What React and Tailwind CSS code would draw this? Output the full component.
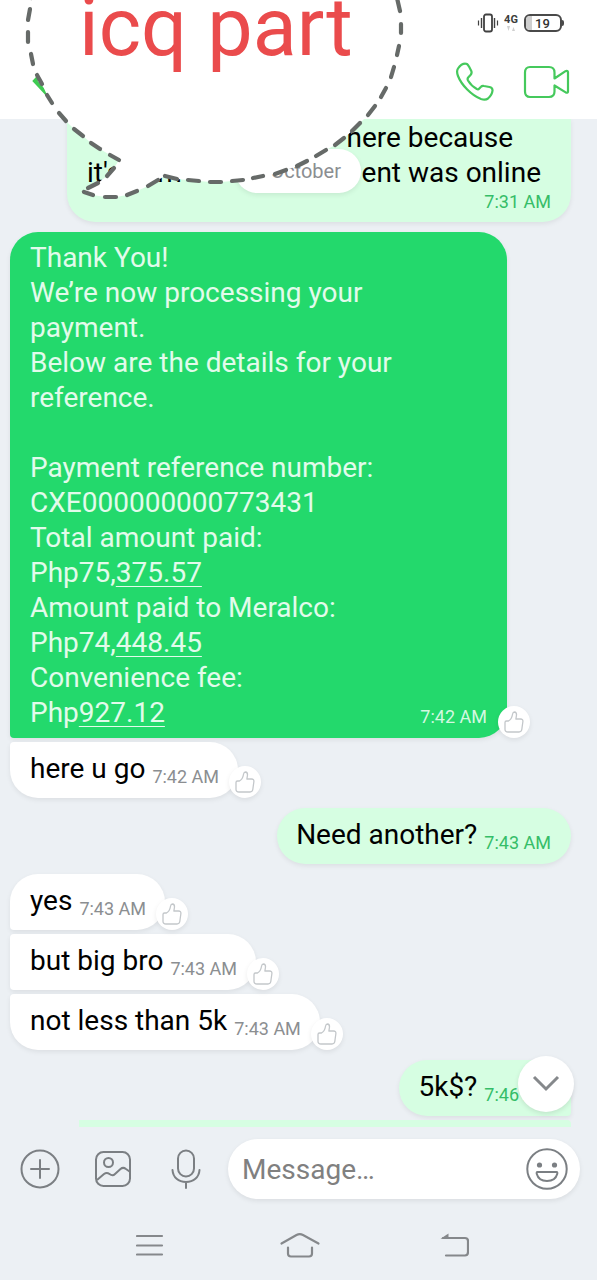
import React, { useState } from 'react';
import { clsx } from 'clsx';

const receiptLines = [
  ['Thank You!'],
  ['We’re now processing your'],
  ['payment.'],
  ['Below are the details for your'],
  ['reference.'],
  [''],
  ['Payment reference number:'],
  ['CXE000000000773431'],
  ['Total amount paid:'],
  ['Php75,', '375.57'],
  ['Amount paid to Meralco:'],
  ['Php74,', '448.45'],
  ['Convenience fee:'],
  ['Php', '927.12'],
];

// x1, y1, x2, y2 of each stroke of the dashed outline
const dashes = [
  [397, -2, 400, 11], [401, 24, 401, 33], [399, 46, 397, 55], [394, 67, 391, 77],
  [386, 88, 381, 97], [375, 106, 368, 115], [360, 123, 352, 131], [344, 138, 335, 145],
  [326, 150, 316, 156], [307, 161, 297, 166], [286, 170, 275, 174], [263, 176, 253, 178],
  [243, 180, 232, 181], [221, 182, 210, 182], [199, 181, 188, 180], [177, 179, 165, 176],
  [158, 180, 148, 186], [137, 191, 127, 195], [116, 197, 105, 197], [93, 195, 84, 192],
  [88, 188, 98, 183], [107, 176, 114, 168], [119, 160, 110, 155], [100, 149, 91, 143],
  [83, 136, 74, 129], [66, 121, 59, 113], [52, 103, 47, 95], [42, 84, 37, 75],
  [33, 64, 31, 54], [28, 42, 28, 32], [28, 20, 30, 9], [31, -2, 32, -6],
];

const outline = dashes.map(([x1, y1, x2, y2]) => `${x1},${y1} ${x2},${y2}`).join(' ');

function Sticker() {
  return (
    <svg className="pointer-events-none absolute top-0 left-0 z-30" width="420" height="210" viewBox="0 0 420 210">
      <polygon points={outline} fill="#fff" />
      {dashes.map(([x1, y1, x2, y2], i) => (
        <line key={i} x1={x1} y1={y1} x2={x2} y2={y2} stroke="#666a68" strokeWidth="4.2" strokeLinecap="round" />
      ))}
      <text x="79" y="55" fontSize="81" fill="#ea4b4c" fontFamily="Roboto, sans-serif">
        icq part
      </text>
    </svg>
  );
}

function LikeButton() {
  const [liked, setLiked] = useState(false);

  return (
    <button
      type="button"
      aria-label="Like"
      onClick={() => setLiked(!liked)}
      className="z-10 -ml-[9px] flex size-8 shrink-0 items-center justify-center rounded-full bg-white shadow-[0_2px_5px_rgba(0,0,0,0.08)]"
    >
      <svg
        width="20"
        height="22"
        viewBox="0 0 20 22"
        fill={liked ? '#d1d5db' : 'none'}
        stroke="#c3c7ca"
        strokeWidth="1.3"
        strokeLinejoin="round"
      >
        <path d="M1 11.5C1 10.5 1.5 10 2.5 10H4.5C6.5 9 8 6.500 8.600 3C8.900 1.200 9.800 1 10.500 1C12 1.200 12.600 2.500 12.500 4L11.900 8H16.500C18.300 8 19 9 18.900 10.500L17.800 18.500C17.500 20.300 16.700 21 15 21H4C2 21 1 20 1 18.500Z" />
      </svg>
    </button>
  );
}

function Incoming({ text, time, className }) {
  return (
    <div className="flex items-end">
      <div className={clsx('flex items-end gap-[7px] rounded-[28px] bg-white pt-[9px] pr-[19px] pb-[11px] pl-5 shadow-[0_2px_5px_rgba(0,0,0,0.07)]', className)}>
        <p className="pb-px text-[28px] leading-[35px] text-black">{text}</p>
        <time className="text-[18px] leading-5 text-[#8b8e91]">{time}</time>
      </div>
      <LikeButton />
    </div>
  );
}

function Outgoing({ text, time, className }) {
  return (
    <div className={clsx('flex items-end gap-[7px] self-end rounded-[28px] bg-[#d6fee2] pt-[9px] pr-5 pb-[11px] pl-[19px] shadow-[0_2px_5px_rgba(0,0,0,0.07)]', className)}>
      <p className="pb-px text-[28px] leading-[35px] text-black">{text}</p>
      <time className="text-[18px] leading-5 whitespace-nowrap text-[#35bd68]">{time}</time>
    </div>
  );
}

function Header() {
  return (
    <header className="bg-white">
      <div className="flex h-[46px] items-center justify-end pr-[33px]">
        <svg width="22" height="20" viewBox="0 0 22 20" fill="none" stroke="#414141">
          <rect x="7" y="1.500" width="8" height="17" rx="2" strokeWidth="1.800" />
          <path d="M4.500 5V15M17.500 5V15" strokeWidth="1.400" />
          <path d="M1.500 7.500V12.500M20.500 7.500V12.500" strokeWidth="1.200" />
        </svg>
        <div className="ml-1 flex w-4 flex-col items-center">
          <span className="text-[11px] leading-3 font-bold text-[#3c3c3c]">4G</span>
          <svg width="10" height="6" viewBox="0 0 10 6" fill="#d0d0d0">
            <path d="M1 0H4L2.500 5ZM6 5L7.500 1L9 5Z" />
          </svg>
        </div>
        <div className="ml-[5px] flex items-center">
          <span className="flex h-[18px] w-[38px] items-center rounded-[6px] border-2 border-[#4a4a4a] bg-white">
            <span className="h-full w-[6px] rounded-l-[4px] bg-[#cfcfcf]" />
            <span className="pl-[3px] text-[13px] leading-none font-medium text-[#333]">19</span>
          </span>
          <span className="h-[6px] w-[2px] rounded-r-sm bg-[#4a4a4a]" />
        </div>
      </div>

      <div className="flex h-[73px] items-center pr-[26px] pb-px pl-[30px]">
        <button type="button" aria-label="Back" className="mr-auto">
          <svg width="24" height="30" viewBox="0 0 24 30" fill="none" stroke="#3fcb52" strokeWidth="4">
            <path d="M17 1L5 14L18 28" />
          </svg>
        </button>
        <button type="button" aria-label="Voice call">
          <svg width="40" height="40" viewBox="0 0 40 40" fill="none" stroke="#45c95c" strokeWidth="2.200" strokeLinejoin="round">
            <path d="M3 6.500C5 3.500 8 1.500 10.500 1.600C12.500 1.600 13.200 3 14 4.500L16.300 9C17 10.600 16.500 11.800 15.500 13L13.200 15.500C12.400 16.500 12.300 17.200 13 18.500C15.300 22.400 18.300 25 21.800 27C22.800 27.500 23.600 27.300 24.300 26.500L26 24.800C26.800 23.900 27.800 23.700 29 24L34.500 25C36.700 25.500 37.700 26.700 37.500 28.700C37.200 31.500 35.500 34.500 33 36.500C31 38 28.500 37.800 26 37C16.500 33.500 6.500 23 3 14C1.800 11 1.600 8.800 3 6.500Z" />
          </svg>
        </button>
        <button type="button" aria-label="Video call" className="ml-[28px]">
          <svg width="48" height="34" viewBox="0 0 48 34" fill="none" stroke="#45c95c" strokeWidth="2.200" strokeLinejoin="round">
            <path d="M7 2H26C29.500 2 31.500 4 31.500 7.500V13.500L42.500 6.200C43.800 5.400 45 6 45 7.200V26.500C45 27.700 43.700 28.100 42.700 27.400L31.500 20.500V26.500C31.500 30 29.500 32 26 32H7C3.800 32 2 30 2 26.500V7.500C2 4 3.800 2 7 2Z" />
          </svg>
        </button>
      </div>
    </header>
  );
}

function Composer() {
  const [draft, setDraft] = useState('');

  return (
    <form className="flex items-center pt-3 pr-[17px] pb-[11px] pl-5" onSubmit={(e) => e.preventDefault()}>
      <div className="mr-[22px] flex items-center gap-[33px]">
        <button type="button" aria-label="Add">
          <svg width="40" height="40" viewBox="0 0 40 40" fill="none" stroke="#7b7f83" strokeWidth="2" strokeLinecap="round">
            <circle cx="20" cy="20" r="18.500" />
            <path d="M20 11V29M11 20H29" />
          </svg>
        </button>
        <button type="button" aria-label="Gallery">
          <svg width="40" height="40" viewBox="0 0 40 40" fill="none" stroke="#7b7f83" strokeWidth="2" strokeLinejoin="round">
            <rect x="3" y="3" width="34" height="34" rx="7.500" />
            <circle cx="15.500" cy="13.500" r="4.500" />
            <path d="M4 31L11 25C13 23.500 14.500 23.500 16.500 25C18.500 26.500 20 27 22 25L27.500 20C29.500 18.300 31 18.500 33 20L36.500 22.500" />
          </svg>
        </button>
        <button type="button" aria-label="Record voice">
          <svg width="40" height="40" viewBox="0 0 40 40" fill="none" stroke="#7b7f83" strokeWidth="2" strokeLinecap="round">
            <rect x="12" y="1.500" width="16" height="26" rx="8" />
            <path d="M6.500 21C7 28.500 12.500 33 20 33S33 28.500 33.500 21M20 33V39" />
          </svg>
        </button>
      </div>
      <div className="flex h-[60px] min-w-0 flex-1 items-center rounded-full bg-white pr-3 pl-[14px] shadow-[0_2px_5px_rgba(0,0,0,0.08)]">
        <input
          type="text"
          aria-label="Message"
          placeholder="Message…"
          value={draft}
          onChange={(e) => setDraft(e.target.value)}
          className="min-w-0 flex-1 text-[28px] leading-[35px] text-black outline-none placeholder:text-[#808080]"
        />
        <button type="button" aria-label="Emoji">
          <svg width="42" height="42" viewBox="0 0 42 42" fill="none" stroke="#7b7f83" strokeWidth="2">
            <circle cx="21" cy="21" r="19.700" />
            <circle cx="13.500" cy="17" r="2.600" fill="#7b7f83" stroke="none" />
            <circle cx="28.500" cy="17" r="2.600" fill="#7b7f83" stroke="none" />
            <path d="M11.500 24H30.500C31.500 24 31.500 25 31.200 26C30 30.500 26 33 21 33S12 30.500 10.800 26C10.500 25 10.500 24 11.500 24Z" />
          </svg>
        </button>
      </div>
    </form>
  );
}

function NavBar() {
  return (
    <nav className="flex h-[70px] items-center justify-between pr-[128px] pl-[136px]">
      <button type="button" aria-label="Recent apps">
        <svg width="28" height="24" viewBox="0 0 28 24" stroke="#85888b" strokeWidth="2.200" strokeLinecap="round">
          <path d="M1 3H26M1 12.500H26M1 21.500H26" />
        </svg>
      </button>
      <button type="button" aria-label="Home">
        <svg width="40" height="26" viewBox="0 0 40 26" fill="none" stroke="#85888b" strokeWidth="2.200" strokeLinecap="round">
          <path d="M1.500 11.500L16.500 3C19 1.700 20.500 1.700 23 3L38.500 11.500" />
          <path d="M8 15.500V21.500C8 23.500 8.800 24.500 11 24.500H29C31.200 24.500 32 23.500 32 21.500V15.500" />
        </svg>
      </button>
      <button type="button" aria-label="Go back">
        <svg width="34" height="26" viewBox="0 0 34 26" fill="none" stroke="#85888b" strokeWidth="2.200" strokeLinecap="round">
          <path d="M8 6H30C32 6 33 7 33 9V20C33 22.500 32 23.500 30 23.500H11" />
          <path d="M5.500 6.800L13.500 1.500V6.800Z" fill="#85888b" stroke="none" />
        </svg>
      </button>
    </nav>
  );
}

function App() {
  return (
    <div className="relative flex min-h-screen flex-col overflow-hidden bg-[#ecf0f4] font-[Roboto,sans-serif]">
      <Header />
      <Sticker />

      <main className="relative flex flex-1 flex-col overflow-hidden pr-[26px] pl-[10px]">
        <div className="absolute top-[30px] left-[235px] z-20 flex h-11 w-[126px] items-center justify-end rounded-full bg-white pr-5 shadow-[0_2px_5px_rgba(0,0,0,0.08)]">
          <span className="text-[20px] text-[#8b8e91]">October</span>
        </div>

        <div className="ml-[57px] flex flex-col rounded-b-[28px] bg-[#d6fee2] px-5 pt-px pb-[10px] text-[28px] leading-[35px] text-black shadow-[0_2px_5px_rgba(0,0,0,0.07)]">
          <p className="self-end pr-[38px]">here because</p>
          <div className="flex pr-[10px]">
            <p>it's</p>
            <p className="pl-9">m</p>
            <p className="ml-auto">ent was online</p>
          </div>
          <time className="mt-[2px] self-end text-[18px] leading-5 text-[#35bd68]">7:31 AM</time>
        </div>

        <div className="mt-[10px] mr-[41px] flex items-end">
          <div className="flex flex-1 items-end justify-between rounded-t-[28px] rounded-br-[28px] rounded-bl-[4px] bg-[#23d96c] px-5 py-2 shadow-[0_2px_5px_rgba(0,0,0,0.07)]">
            <div className="text-[28px] leading-[35px] text-[#e2fbeb]">
              {receiptLines.map(([text, link], i) => (
                <p key={i} className="min-h-[35px]">
                  {text}
                  {link && (
                    <a href="#amount" className="underline decoration-1 underline-offset-4">
                      {link}
                    </a>
                  )}
                </p>
              ))}
            </div>
            <time className="mb-[3px] text-[18px] leading-5 text-[#d3f8e0]">7:42 AM</time>
          </div>
          <LikeButton />
        </div>

        <div className="mt-1">
          <Incoming text="here u go" time="7:42 AM" className="rounded-tl-[4px]" />
        </div>

        <div className="mt-[10px] flex flex-col">
          <Outgoing text="Need another?" time="7:43 AM" />
        </div>

        <div className="mt-[10px] flex flex-col gap-1">
          <Incoming text="yes" time="7:43 AM" className="rounded-bl-[4px]" />
          <Incoming text="but big bro" time="7:43 AM" className="rounded-l-[4px]" />
          <Incoming text="not less than 5k" time="7:43 AM" className="rounded-tl-[4px]" />
        </div>

        <div className="mt-[10px] flex flex-1 flex-col gap-1">
          <Outgoing text="5k$?" time="7:46 AM" className="rounded-br-[4px]" />
          <div className="ml-[69px] min-h-[7px] flex-1 rounded-tr-[4px] bg-[#d6fee2]" />
        </div>

        <button
          type="button"
          aria-label="Scroll to latest"
          className="absolute right-[23px] bottom-[15px] z-20 flex size-14 items-center justify-center rounded-full bg-white shadow-[0_2px_5px_rgba(0,0,0,0.1)]"
        >
          <svg width="28" height="18" viewBox="0 0 28 18" fill="none" stroke="#85888b" strokeWidth="3">
            <path d="M2 2L14 14L26 2" />
          </svg>
        </button>
      </main>

      <Composer />
      <NavBar />
    </div>
  );
}

export default App;
